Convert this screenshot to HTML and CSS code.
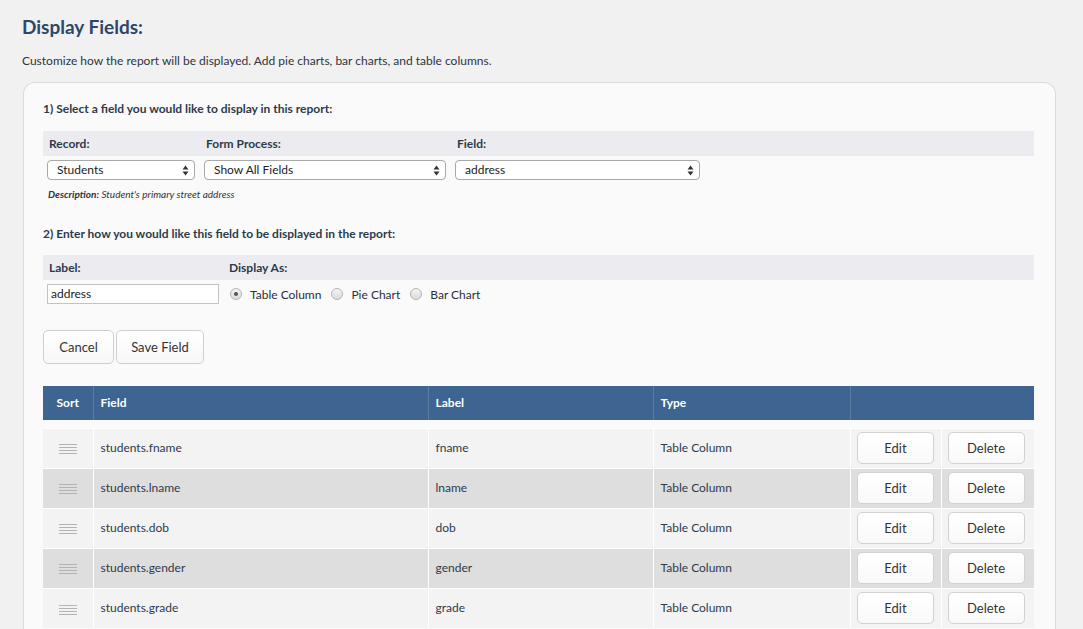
FILE: index.html
```html
<!DOCTYPE html>
<html>
<head>
<meta charset="utf-8">
<link rel="stylesheet" href="styles.css">
</head>
<body>
<div class="page">
  <h1 class="title">Display Fields:</h1>
  <p class="intro">Customize how the report will be displayed. Add pie charts, bar charts, and table columns.</p>

  <div class="panel">
    <div class="step">1) Select a field you would like to display in this report:</div>
    <div class="band band-1">
      <span class="lbl w-record">Record:</span>
      <span class="lbl w-process">Form Process:</span>
      <span class="lbl">Field:</span>
    </div>
    <div class="row-selects">
      <div class="select s-record"><span>Students</span><svg class="arrows" width="7" height="11" viewBox="0 0 7 11"><path d="M3.5 0.5 L6.5 4.5 L0.5 4.5 Z M3.5 10.5 L6.5 6.5 L0.5 6.5 Z" fill="#333"/></svg></div>
      <div class="select s-process"><span>Show All Fields</span><svg class="arrows" width="7" height="11" viewBox="0 0 7 11"><path d="M3.5 0.5 L6.5 4.5 L0.5 4.5 Z M3.5 10.5 L6.5 6.5 L0.5 6.5 Z" fill="#333"/></svg></div>
      <div class="select s-field"><span>address</span><svg class="arrows" width="7" height="11" viewBox="0 0 7 11"><path d="M3.5 0.5 L6.5 4.5 L0.5 4.5 Z M3.5 10.5 L6.5 6.5 L0.5 6.5 Z" fill="#333"/></svg></div>
    </div>
    <div class="desc"><b>Description:</b> Student's primary street address</div>

    <div class="step step-2">2) Enter how you would like this field to be displayed in the report:</div>
    <div class="band band-2">
      <span class="lbl w-label">Label:</span>
      <span class="lbl">Display As:</span>
    </div>
    <div class="row-label">
      <div class="input">address</div>
      <div class="radios">
        <span class="radio checked"></span><span class="rtext">Table Column</span>
        <span class="radio"></span><span class="rtext">Pie Chart</span>
        <span class="radio"></span><span class="rtext">Bar Chart</span>
      </div>
    </div>

    <div class="actions">
      <button class="btn btn-cancel">Cancel</button>
      <button class="btn btn-save">Save Field</button>
    </div>

    <table class="grid">
      <colgroup>
        <col class="c-sort"><col class="c-field"><col class="c-label"><col class="c-type"><col class="c-edit"><col class="c-del">
      </colgroup>
      <thead>
        <tr>
          <th class="th-sort">Sort</th>
          <th>Field</th>
          <th>Label</th>
          <th>Type</th>
          <th colspan="2"></th>
        </tr>
      </thead>
      <tbody>
        <tr class="spacer"><td colspan="6"></td></tr>
        <tr class="odd">
          <td class="grip-cell"><span class="grip"><i></i><i></i><i></i><i></i></span></td>
          <td>students.fname</td><td>fname</td><td>Table Column</td>
          <td class="bcell"><button class="rbtn">Edit</button></td>
          <td class="bcell del"><button class="rbtn">Delete</button></td>
        </tr>
        <tr class="even">
          <td class="grip-cell"><span class="grip"><i></i><i></i><i></i><i></i></span></td>
          <td>students.lname</td><td>lname</td><td>Table Column</td>
          <td class="bcell"><button class="rbtn">Edit</button></td>
          <td class="bcell del"><button class="rbtn">Delete</button></td>
        </tr>
        <tr class="odd">
          <td class="grip-cell"><span class="grip"><i></i><i></i><i></i><i></i></span></td>
          <td>students.dob</td><td>dob</td><td>Table Column</td>
          <td class="bcell"><button class="rbtn">Edit</button></td>
          <td class="bcell del"><button class="rbtn">Delete</button></td>
        </tr>
        <tr class="even">
          <td class="grip-cell"><span class="grip"><i></i><i></i><i></i><i></i></span></td>
          <td>students.gender</td><td>gender</td><td>Table Column</td>
          <td class="bcell"><button class="rbtn">Edit</button></td>
          <td class="bcell del"><button class="rbtn">Delete</button></td>
        </tr>
        <tr class="odd">
          <td class="grip-cell"><span class="grip"><i></i><i></i><i></i><i></i></span></td>
          <td>students.grade</td><td>grade</td><td>Table Column</td>
          <td class="bcell"><button class="rbtn">Edit</button></td>
          <td class="bcell del"><button class="rbtn">Delete</button></td>
        </tr>
      </tbody>
    </table>
  </div>
</div>
</body>
</html>
```

FILE: styles.css
```css
* { box-sizing: border-box; }
html, body { margin: 0; padding: 0; overflow: hidden; }
body {
  background: #f1f1f1;
  font-family: Lato, "Open Sans", "Liberation Sans", sans-serif;
  color: #333;
  width: 1083px;
  height: 629px;
}
.page { padding: 15px 0 0 22px; height: 629px; overflow: hidden; }
.title {
  margin: 0;
  font-size: 19px;
  line-height: 23px;
  font-weight: 700;
  color: #2c4769;
}
.intro {
  margin: 15px 0 0 0;
  font-size: 12px;
  line-height: 16px;
  color: #2f3440;
}
.panel {
  margin: 13px 0 0 1px;
  width: 1033px;
  height: 560px;
  background: #fafafa;
  border: 1px solid #dcdcdc;
  border-bottom: none;
  border-radius: 12px 12px 0 0;
  padding: 18px 20px 0 19px;
}
.step {
  font-size: 12px;
  line-height: 16px;
  font-weight: 700;
  color: #2c3a4c;
}
.band {
  display: flex;
  align-items: center;
  height: 25px;
  background: #ececf0;
  padding-left: 6px;
  width: 991px;
}
.band-1 { margin-top: 14px; }
.lbl { font-size: 12px; font-weight: 700; color: #2c3a4c; }
.w-record { width: 157px; }
.w-process { width: 251px; }
.w-label { width: 180px; }
.row-selects {
  display: flex;
  gap: 9px;
  margin-top: 4px;
  padding-left: 4px;
}
.select {
  height: 20px;
  border: 1px solid #a9a9a9;
  border-radius: 4px;
  background: #fff;
  display: flex;
  align-items: center;
  justify-content: space-between;
  padding: 0 5px 0 9px;
  font-size: 12px;
  line-height: 16px;
  color: #222;
}
.select span { margin-top: -1px; }
.s-record { width: 148px; }
.s-process { width: 242px; }
.s-field { width: 245px; }
.desc {
  margin-top: 7px;
  padding-left: 5px;
  font-size: 10px;
  line-height: 14px;
  font-style: italic;
  color: #333;
}
.desc b { font-weight: 700; }
.step-2 { margin-top: 25px; }
.band-2 { margin-top: 13px; }
.row-label {
  display: flex;
  align-items: center;
  margin-top: 4px;
  padding-left: 4px;
}
.input {
  width: 172px;
  height: 20px;
  border: 1px solid #c3c3c3;
  background: #fff;
  font-size: 12px;
  line-height: 18px;
  padding-left: 3px;
  color: #222;
}
.radios {
  display: flex;
  align-items: center;
  margin-left: 11px;
  font-size: 12px;
  color: #2a2f3a;
}
.radio {
  width: 12px;
  height: 12px;
  border-radius: 50%;
  border: 1px solid #b5b5b5;
  background: linear-gradient(#f4f4f4, #dcdcdc);
  display: inline-flex;
  align-items: center;
  justify-content: center;
  margin-right: 8px;
}
.radio.checked::after {
  content: "";
  width: 4px;
  height: 4px;
  border-radius: 50%;
  background: #555;
}
.rtext { margin-right: 10px; }
.actions {
  display: flex;
  gap: 2px;
  margin-top: 26px;
}
.btn {
  height: 34px;
  border: 1px solid #cfcfcf;
  border-radius: 5px;
  background: linear-gradient(#ffffff, #f7f7f7);
  font-family: inherit;
  font-size: 13px;
  color: #333;
  padding: 0;
}
.btn-cancel { width: 71px; }
.btn-save { width: 88px; }
.grid {
  margin-top: 22px;
  width: 991px;
  border-collapse: collapse;
  table-layout: fixed;
}
.c-sort { width: 50px; }
.c-field { width: 335px; }
.c-label { width: 225px; }
.c-type { width: 197px; }
.c-edit { width: 91px; }
.c-del { width: 93px; }
.grid th {
  background: #3e6491;
  color: #fff;
  font-size: 12px;
  font-weight: 700;
  text-align: left;
  height: 34px;
  padding: 0 0 1px 7px;
  border-left: 1px solid #5b7ca3;
}
.grid th:first-child { border-left: none; }
.grid th.th-sort { text-align: center; padding: 0 0 1px 0; }
.grid .spacer td { height: 8px; background: #fafafa; padding: 0; border: none; }
.grid td {
  height: 40px;
  font-size: 12px;
  color: #2d3a4b;
  padding: 0 0 1px 7px;
  border-left: 1px solid #fff;
  border-top: 1px solid #fff;
}
.grid td:first-child { border-left: none; }
.odd td { background: #f3f3f3; }
.even td { background: #dedede; }
.grid td.grip-cell { padding: 0; text-align: center; }
.grip {
  display: inline-flex;
  flex-direction: column;
  gap: 2px;
  vertical-align: middle;
}
.grip i {
  display: block;
  width: 18px;
  height: 1px;
  background: #b3b3b3;
}
.grid td.bcell { padding: 0; text-align: center; }
.grid td.bcell.del { text-align: left; padding-left: 6px; }
.rbtn {
  width: 77px;
  height: 32px;
  border: 1px solid #d2d2d2;
  border-radius: 5px;
  background: linear-gradient(#ffffff, #f9f9f9);
  font-family: inherit;
  font-size: 13px;
  color: #333;
  padding: 0;
  vertical-align: middle;
}
```
